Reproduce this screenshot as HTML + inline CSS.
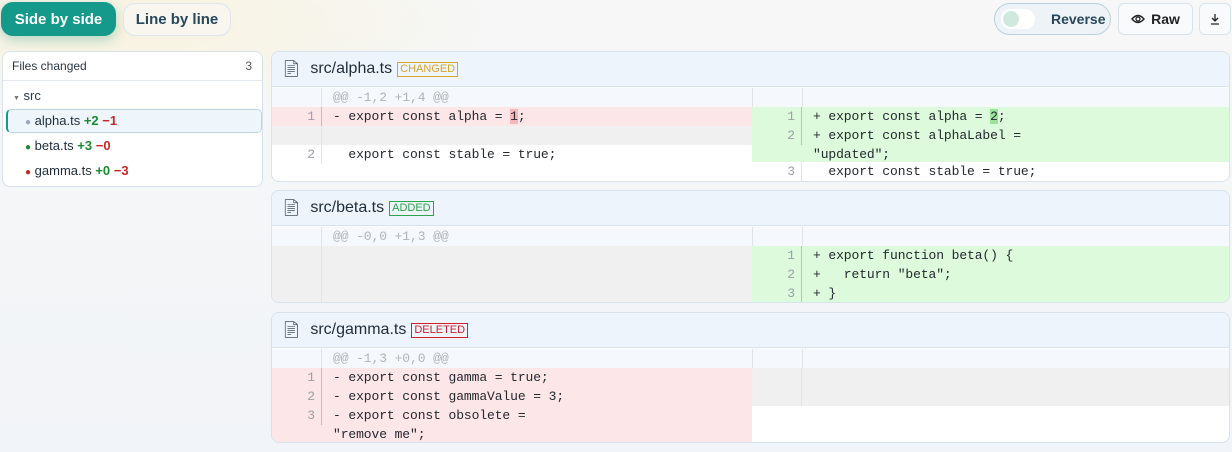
<!DOCTYPE html><html><head><meta charset="utf-8"><style>
*{box-sizing:border-box;margin:0;padding:0}
body{width:1232px;height:452px;overflow:hidden;font-family:"Liberation Sans",sans-serif;background:linear-gradient(180deg,#f6f7f6 0%,#f1f4f8 100%);position:relative;color:#1f2d3a}
.glow{position:absolute;left:0;top:0;width:500px;height:120px;background:radial-gradient(ellipse at 20% 20%,rgba(250,240,210,.7),rgba(250,240,210,0) 70%)}
.btn{position:absolute;border-radius:12px;font-weight:bold;font-size:15px;display:flex;align-items:center;justify-content:center}
.p{position:absolute;left:271px;width:959px;background:#fff;border:1px solid #d8e2ec;border-radius:8px;overflow:hidden}
.hd{position:absolute;left:0;top:0;right:0;height:35px;background:#eef4fb;border-bottom:1px solid #d8e2ec;display:flex;align-items:center;padding-left:9px;font-size:16px;color:#1f2d3a}
.tag{font-size:11px;border:1px solid;padding:0 2px;margin-left:5px;line-height:13px}
.r{position:absolute;font-family:"Liberation Mono",monospace;font-size:13px;line-height:19px;color:#24292f;white-space:pre;letter-spacing:-0.1px}
.n{position:absolute;width:50px;text-align:right;padding-right:6px;color:#9aa0a6;border-right:1px solid #e1e4e8}
.c{position:absolute;left:51px;padding-left:10px}
.hk{color:#b0b4b8}
.del{background:#fde6e7}.add{background:#ddfbdc}.gr{background:#f0f0f0}.hb{background:#f5f8fc}
.del .n{border-color:#f1a7ab}.add .n{border-color:#9fd89c}
.sb{position:absolute;left:22px;color:#1f2d3a;font-size:13px}
</style></head><body>
<div class="glow"></div>
<div class="btn" style="left:1px;top:2px;width:115px;height:34px;background:#14998a;color:#fff;box-shadow:0 4px 12px rgba(20,150,130,.3)">Side by side</div>
<div class="btn" style="left:123px;top:3px;width:108px;height:33px;border:1px solid #dbe6ee;background:#f8f6ee;color:#27475a">Line by line</div>
<div class="btn" style="left:994px;top:3px;width:117px;height:32px;border:1px solid #b9d1de;border-radius:16px;background:#eef3f8;color:#27475a;justify-content:flex-start;padding-left:6px"><span style="width:34px;height:20px;border-radius:10px;background:#fff;position:relative;display:inline-block"><span style="position:absolute;left:2px;top:2px;width:16px;height:16px;border-radius:50%;background:#cfe9df"></span></span><span style="margin-left:16px;font-size:14px">Reverse</span></div>
<div class="btn" style="left:1118px;top:3px;width:75px;height:32px;border:1px solid #d8e2ec;border-radius:6px;background:#f8fafc;font-size:14px;color:#222"><svg width="14" height="10" viewBox="0 0 14 10" style="margin-right:6px"><path d="M1 5Q7-2 13 5Q7 12 1 5Z" fill="none" stroke="#222" stroke-width="1.4"/><circle cx="7" cy="5" r="2" fill="none" stroke="#222" stroke-width="1.3"/></svg>Raw</div>
<div class="btn" style="left:1199px;top:3px;width:32px;height:32px;border:1px solid #d8e2ec;border-radius:6px;background:#f8fafc"><svg width="10" height="12" viewBox="0 0 10 12"><path d="M5 1V8M2 5L5 8L8 5M1 11H9" fill="none" stroke="#222" stroke-width="1.3"/></svg></div>

<div style="position:absolute;left:2px;top:51px;width:261px;height:136px;background:#fff;border:1px solid #d8e2ec;border-radius:8px;font-size:12px">
<div style="height:29px;border-bottom:1px solid #e3e8ee;display:flex;align-items:center;justify-content:space-between;padding:0 10px 0 9px;color:#2a3744">Files changed<span style="color:#555">3</span></div>
<div class="sb" style="left:10px;top:36px;color:#2a3744"><span style="font-size:7px;color:#777">▼</span> src</div>
<div style="position:absolute;left:3px;top:57px;width:256px;height:24px;border:1px solid #bcd4e3;border-left:2px solid #14998a;border-radius:5px;background:#eef5fb"></div>
<div class="sb" style="top:61px"><span style="color:#9aa7b4;font-size:10px">●</span> alpha.ts <b style="color:#1a8a34">+2</b> <b style="color:#c62828">−1</b></div>
<div class="sb" style="top:86px"><span style="color:#1a8a34;font-size:10px">●</span> beta.ts <b style="color:#1a8a34">+3</b> <b style="color:#c62828">−0</b></div>
<div class="sb" style="top:111px"><span style="color:#c62828;font-size:10px">●</span> gamma.ts <b style="color:#1a8a34">+0</b> <b style="color:#c62828">−3</b></div>
</div>

<!-- panel 1 -->
<div class="p" style="top:51px;height:131px">
<div class="hd">📄&#xFE0E;<span style="margin-left:9px">src/alpha.ts</span><span class="tag" style="color:#d4a72c;border-color:#d4a72c">CHANGED</span></div>
<div class="r hb" style="left:0;top:36px;width:480px;height:19px"><span class="n" style="height:19px"></span><span class="c hk">@@ -1,2 +1,4 @@</span></div>
<div class="r hb" style="left:480px;top:36px;width:479px;height:19px;border-left:1px solid #dde3ea"><span class="n" style="height:19px"></span></div>
<div class="r del" style="left:0;top:55px;width:480px;height:19px"><span class="n" style="height:19px">1</span><span class="c">- export const alpha = <span style="background:#f7b6ba">1</span>;</span></div>
<div class="r gr" style="left:0;top:74px;width:480px;height:19px"><span class="n" style="height:19px"></span></div>
<div class="r" style="left:0;top:93px;width:480px;height:19px"><span class="n" style="height:19px">2</span><span class="c">  export const stable = true;</span></div>
<div class="r add" style="left:480px;top:55px;width:479px;height:19px"><span class="n" style="height:19px">1</span><span class="c">+ export const alpha = <span style="background:#9be29a">2</span>;</span></div>
<div class="r add" style="left:480px;top:74px;width:479px;height:36px"><span class="n" style="height:19px">2</span><span class="c">+ export const alphaLabel =
"updated";</span></div>
<div class="r" style="left:480px;top:110px;width:479px;height:19px"><span class="n" style="height:19px">3</span><span class="c">  export const stable = true;</span></div>
</div>

<!-- panel 2 -->
<div class="p" style="top:190px;height:113px">
<div class="hd">📄&#xFE0E;<span style="margin-left:9px">src/beta.ts</span><span class="tag" style="color:#2da44e;border-color:#2da44e">ADDED</span></div>
<div class="r hb" style="left:0;top:36px;width:480px;height:19px"><span class="n" style="height:19px"></span><span class="c hk">@@ -0,0 +1,3 @@</span></div>
<div class="r hb" style="left:480px;top:36px;width:479px;height:19px;border-left:1px solid #dde3ea"><span class="n" style="height:19px"></span></div>
<div class="r gr" style="left:0;top:55px;width:480px;height:57px"><span class="n" style="height:57px"></span></div>
<div class="r add" style="left:480px;top:55px;width:479px;height:19px"><span class="n" style="height:19px">1</span><span class="c">+ export function beta() {</span></div>
<div class="r add" style="left:480px;top:74px;width:479px;height:19px"><span class="n" style="height:19px">2</span><span class="c">+   return "beta";</span></div>
<div class="r add" style="left:480px;top:93px;width:479px;height:19px"><span class="n" style="height:19px">3</span><span class="c">+ }</span></div>
</div>

<!-- panel 3 -->
<div class="p" style="top:312px;height:131px">
<div class="hd" style="height:35px">📄&#xFE0E;<span style="margin-left:9px">src/gamma.ts</span><span class="tag" style="color:#cf222e;border-color:#cf222e">DELETED</span></div>
<div class="r hb" style="left:0;top:36px;width:480px;height:19px"><span class="n" style="height:19px"></span><span class="c hk">@@ -1,3 +0,0 @@</span></div>
<div class="r hb" style="left:480px;top:36px;width:479px;height:19px;border-left:1px solid #dde3ea"><span class="n" style="height:19px"></span></div>
<div class="r del" style="left:0;top:55px;width:480px;height:19px"><span class="n" style="height:19px">1</span><span class="c">- export const gamma = true;</span></div>
<div class="r del" style="left:0;top:74px;width:480px;height:19px"><span class="n" style="height:19px">2</span><span class="c">- export const gammaValue = 3;</span></div>
<div class="r del" style="left:0;top:93px;width:480px;height:36px"><span class="n" style="height:19px">3</span><span class="c">- export const obsolete =
"remove me";</span></div>
<div class="r gr" style="left:480px;top:55px;width:479px;height:38px"><span class="n" style="height:38px"></span></div>
</div>
</body></html>
